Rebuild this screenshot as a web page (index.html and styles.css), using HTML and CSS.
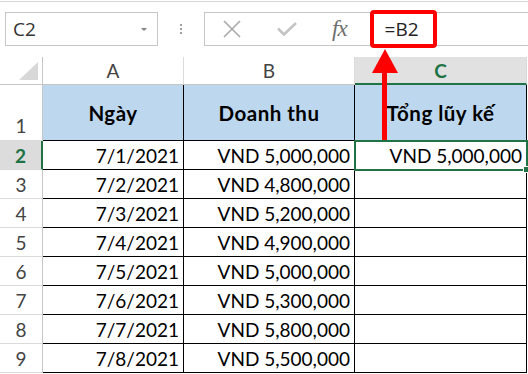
FILE: index.html
```html
<!DOCTYPE html>
<html lang="vi">
<head>
    <meta charset="UTF-8">
    <meta name="viewport" content="width=device-width, initial-scale=1.0">
    <title>Tổng lũy kế</title>
    <link rel="stylesheet" href="styles.css">
</head>
<body>
    <div class="toolbar">
        <div class="namebox"><span>C2</span><span class="caret"></span></div>
        <div class="grip"><i></i><i></i><i></i></div>
        <div class="formula">
            <svg class="icon-x" width="18" height="18" viewBox="0 0 18 18">
                <path d="M1 1 L17 17 M17 1 L1 17" stroke="#a8a8a8" stroke-width="1.6" fill="none"/>
            </svg>
            <svg class="icon-check" width="20" height="14" viewBox="0 0 20 14">
                <path d="M1 6.5 L7 12.5 L19 1" stroke="#c4c4c4" stroke-width="2.6" fill="none"/>
            </svg>
            <span class="fx">fx</span>
            <span class="ftext">=B2</span>
        </div>
    </div>

    <div class="sheet">
        <div class="corner"><span class="tri"></span></div>
        <div class="colhdr">A</div>
        <div class="colhdr">B</div>
        <div class="colhdr active">C</div>
        <div class="pad"></div>

        <div class="rowhdr first">1</div>
        <div class="cell head">Ngày</div>
        <div class="cell head">Doanh thu</div>
        <div class="cell head">Tổng lũy kế</div>
        <div class="pad"></div>

        <div class="rowhdr active">2</div>
        <div class="cell">7/1/2021</div>
        <div class="cell">VND 5,000,000</div>
        <div class="cell sel">VND 5,000,000</div>
        <div class="pad"></div>

        <div class="rowhdr">3</div>
        <div class="cell">7/2/2021</div>
        <div class="cell">VND 4,800,000</div>
        <div class="cell"></div>
        <div class="pad"></div>

        <div class="rowhdr">4</div>
        <div class="cell">7/3/2021</div>
        <div class="cell">VND 5,200,000</div>
        <div class="cell"></div>
        <div class="pad"></div>

        <div class="rowhdr">5</div>
        <div class="cell">7/4/2021</div>
        <div class="cell">VND 4,900,000</div>
        <div class="cell"></div>
        <div class="pad"></div>

        <div class="rowhdr">6</div>
        <div class="cell">7/5/2021</div>
        <div class="cell">VND 5,000,000</div>
        <div class="cell"></div>
        <div class="pad"></div>

        <div class="rowhdr">7</div>
        <div class="cell">7/6/2021</div>
        <div class="cell">VND 5,300,000</div>
        <div class="cell"></div>
        <div class="pad"></div>

        <div class="rowhdr">8</div>
        <div class="cell">7/7/2021</div>
        <div class="cell">VND 5,800,000</div>
        <div class="cell"></div>
        <div class="pad"></div>

        <div class="rowhdr">9</div>
        <div class="cell">7/8/2021</div>
        <div class="cell">VND 5,500,000</div>
        <div class="cell"></div>
        <div class="pad"></div>
    </div>

    <!-- callout: red box round the formula and arrow up from C1 -->
    <div class="callout"></div>
    <svg class="arrow" width="32" height="96" viewBox="0 0 32 96">
        <polygon points="16,3 3,27 29,27" fill="#ff0000"/>
        <rect x="13" y="26" width="5" height="68" fill="#ff0000"/>
    </svg>
</body>
</html>
```

FILE: styles.css
```css
body {
    margin: 0;
    width: 528px;
    height: 374px;
    overflow: hidden;
    background: #fff;
    font-family: Lato, "Open Sans", sans-serif;
    position: relative;
}

/* ---------- formula bar ---------- */
.toolbar {
    margin-top: 1px;
    border-top: 1px solid #d6d6d6;
    height: 56px;
    box-sizing: border-box;
    padding-top: 10px;
    display: flex;
    align-items: flex-start;
}
.namebox {
    margin-left: 5px;
    width: 153px;
    height: 34px;
    box-sizing: border-box;
    border: 1px solid #c6c6c6;
    display: flex;
    align-items: center;
    padding: 0 10px 0 7px;
    font-family: "Open Sans", sans-serif;
    font-size: 19px;
    color: #333;
}
.caret {
    margin-left: auto;
    border-left: 3px solid transparent;
    border-right: 3px solid transparent;
    border-top: 3px solid #808080;
}
.grip {
    width: 46px;
    height: 34px;
    display: flex;
    flex-direction: column;
    align-items: center;
    justify-content: center;
    gap: 2px;
}
.grip i {
    width: 2px;
    height: 2px;
    background: #a0a0a0;
}
.formula {
    flex: 1;
    height: 34px;
    box-sizing: border-box;
    border: 1px solid #c6c6c6;
    border-right: none;
    display: flex;
    align-items: center;
}
.icon-x {
    margin-left: 18px;
}
.icon-check {
    margin-left: 36px;
}
.fx {
    margin-left: 35px;
    font-family: "Liberation Serif", serif;
    font-style: italic;
    font-size: 23px;
    color: #6e6e6e;
    letter-spacing: -1px;
}
.ftext {
    margin-left: 38px;
    font-family: "Open Sans", sans-serif;
    font-size: 19px;
    color: #222;
}

/* ---------- sheet grid ---------- */
.sheet {
    display: grid;
    grid-template-columns: 43px 141px 171px 172px 1px;
    grid-template-rows: 28px 56px repeat(8, 29px);
    font-size: 19px;
}
.sheet > div {
    box-sizing: border-box;
}
.corner {
    border-right: 1px solid #c6c6c6;
    border-bottom: 1px solid #c6c6c6;
    display: flex;
    justify-content: flex-end;
    align-items: flex-end;
    padding: 0 4px 4px 0;
}
.tri {
    width: 19px;
    height: 18px;
    background: #d8d8d8;
    clip-path: polygon(100% 0, 100% 100%, 0 100%);
}
.colhdr {
    border-right: 1px solid #dadada;
    border-bottom: 1px solid #c6c6c6;
    display: flex;
    align-items: center;
    justify-content: center;
    color: #444;
}
.colhdr.active {
    background: #e1e1e1;
    color: #217346;
    font-weight: bold;
    border-bottom: 2px solid #217346;
}
.rowhdr {
    border-right: 1px solid #c6c6c6;
    border-bottom: 1px solid #dadada;
    display: flex;
    align-items: center;
    justify-content: center;
    color: #444;
}
.rowhdr.first {
    align-items: flex-end;
    padding-bottom: 3px;
}
.rowhdr.active {
    background: #dcdcdc;
    color: #217346;
    font-weight: bold;
    border-right: 2px solid #217346;
}
.cell {
    border-right: 1px solid #000;
    border-bottom: 1px solid #000;
    display: flex;
    align-items: center;
    justify-content: flex-end;
    padding-right: 4px;
    color: #000;
    white-space: nowrap;
}
.cell.head {
    background: #bdd7ee;
    justify-content: center;
    padding-right: 0;
    font-weight: bold;
    font-size: 20.5px;
    letter-spacing: 0.5px;
}
.cell.sel {
    position: relative;
    z-index: 1;
    border-right: none;
    border-bottom: none;
    box-shadow: 0 0 0 1px #217346, inset 0 0 0 1px #217346;
    padding-right: 5px;
}
.cell.sel::after {
    content: "";
    position: absolute;
    right: -3px;
    bottom: -3px;
    width: 5px;
    height: 5px;
    background: #217346;
    border: 1px solid #fff;
}

/* ---------- red annotation ---------- */
.callout {
    position: absolute;
    left: 370px;
    top: 10px;
    width: 67px;
    height: 38px;
    box-sizing: border-box;
    border: 4px solid #ff0000;
    border-radius: 4px;
}
.arrow {
    position: absolute;
    left: 369px;
    top: 46px;
}
```
